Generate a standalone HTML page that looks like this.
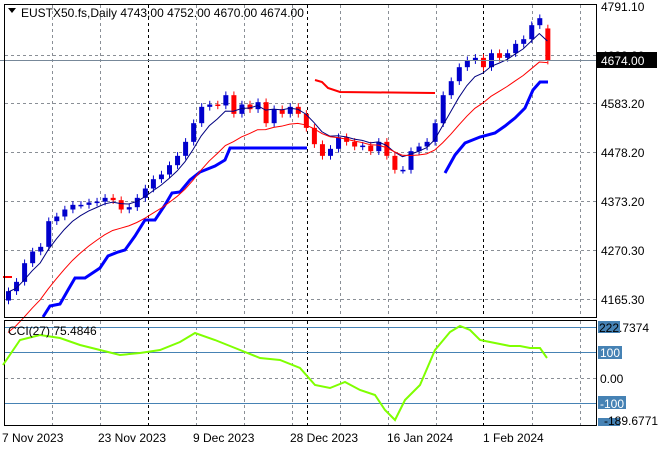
<!DOCTYPE html><html><head><style>
body{margin:0;width:660px;height:450px;background:#fff;overflow:hidden;font-family:"Liberation Sans",sans-serif;}
svg{position:absolute;left:0;top:0}
text{font-family:"Liberation Sans",sans-serif;font-size:12px;fill:#000}
</style></head><body>
<svg id="s" width="660" height="450" xmlns="http://www.w3.org/2000/svg">
<g id="grid" stroke="#8a8f96" stroke-dasharray="3,3" stroke-width="1"></g>
<g id="cand"></g>
<polyline fill="none" stroke="#0000ff" stroke-width="3" points="43,317 50,306 60,304 68,290 75,278 85,278 100,268 108,256 118,252 125,250 135,236 145,220 155,220 165,205 172,193 180,192 190,180 200,172 215,166 225,160 230,148 307,148"/>
<polyline fill="none" stroke="#0000ff" stroke-width="3" points="445,173 455,155 465,143 480,137 495,133 505,126 515,118 525,108 533,90 540,82 548,82"/>
<polyline fill="none" stroke="#ff0000" stroke-width="2" points="315,80 322,82 328,88 340,92 435,93"/>
<line x1="3" y1="277" x2="12" y2="277" stroke="#ff0000" stroke-width="2"/>
<g id="ma"></g>
<line x1="0" y1="60.5" x2="597" y2="60.5" stroke="#778899"/>
<rect x="4.5" y="4.5" width="592" height="313" fill="none" stroke="#000"/>
<rect x="4.5" y="320.5" width="592" height="105" fill="none" stroke="#000"/>
<g stroke="#4682b4"><line x1="5" y1="327.5" x2="596" y2="327.5"/><line x1="5" y1="352.5" x2="596" y2="352.5"/><line x1="5" y1="403.5" x2="596" y2="403.5"/></g>
<polyline fill="none" stroke="#7fff00" stroke-width="2" points="3,365 20,340 40,335 60,338 80,345 100,350 120,355 140,353 160,350 180,342 195,333 215,340 240,350 260,358 280,360 300,368 315,385 330,388 345,382 360,390 375,395 385,410 395,420 405,400 420,385 435,350 450,332 460,326 470,330 480,340 490,342 500,344 510,346 520,346 530,348 540,348 547,358"/>
<path d="M8,8 h8 l-4,5z" fill="#000"/>
<text x="21" y="17">EUSTX50.fs,Daily  4743.00 4752.00 4670.00 4674.00</text>
<text x="8" y="335">CCI(27) 75.4846</text>
<g id="pl"></g>
<rect x="597" y="52" width="60" height="16" fill="#000"/>
<text x="601" y="65" style="fill:#fff">4674.00</text>
<rect x="598" y="321" width="22" height="12" fill="#4682b4"/>
<text x="599" y="332">222.7374</text>
<rect x="598" y="346" width="24" height="13" fill="#4682b4"/>
<text x="600" y="357" style="fill:#fff">100</text>
<text x="600" y="383">0.00</text>
<rect x="598" y="396" width="28" height="13" fill="#4682b4"/>
<text x="600" y="408" style="fill:#fff">-100</text>
<rect x="598" y="418" width="22" height="8" fill="#4682b4"/>
<text x="604" y="425">-189.6771</text>
<text x="2" y="442">7 Nov 2023</text><text x="98" y="442">23 Nov 2023</text><text x="193" y="442">9 Dec 2023</text><text x="290" y="442">28 Dec 2023</text><text x="387" y="442">16 Jan 2024</text><text x="483" y="442">1 Feb 2024</text>
</svg>
<script>
var N="http://www.w3.org/2000/svg";
function el(p,t,a){var e=document.createElementNS(N,t);for(var k in a)e.setAttribute(k,a[k]);document.getElementById(p).appendChild(e);return e;}
function Y(p){return 6+(4791.1-p)*49/105;}
[52,100,196,244,292,340,388,436,532,580].forEach(function(x){el('grid','line',{x1:x+.5,y1:5,x2:x+.5,y2:318});el('grid','line',{x1:x+.5,y1:321,x2:x+.5,y2:425});});
[148,307,483].forEach(function(x){el('grid','line',{x1:x+.5,y1:5,x2:x+.5,y2:318,stroke:'#000'});el('grid','line',{x1:x+.5,y1:321,x2:x+.5,y2:425,stroke:'#000'});});
[55,103,152,201,250,299].forEach(function(y){el('grid','line',{x1:5,y1:y+.5,x2:596,y2:y+.5});});
el('grid','line',{x1:5,y1:378.5,x2:596,y2:378.5});
var pr=[["4791.10",6],["4688.20",55],["4583.20",103],["4478.20",152],["4373.20",201],["4270.30",250],["4165.30",299]];
pr.forEach(function(a){var t=el('pl','text',{x:601,y:a[1]+5});t.textContent=a[0];});
var c=[4180,4200,4240,4265,4275,4330,4340,4355,4365,4365,4370,4372,4380,4375,4355,4360,4380,4400,4420,4430,4450,4470,4500,4540,4575,4580,4578,4600,4560,4580,4570,4585,4540,4570,4560,4575,4560,4530,4495,4470,4485,4510,4500,4490,4492,4480,4500,4470,4440,4440,4480,4490,4500,4540,4600,4630,4660,4675,4680,4660,4690,4680,4690,4710,4720,4750,4765,4674];
var o=4160,e5=4170,e10=4090,b=[],r=[];
c.forEach(function(cl,i){var x=8+i*8.05;var op=(i==c.length-1)?4743:o;var up=cl>=op;var col=up?'#0000cc':'#ff0000';
var hi=Math.max(cl,op)+8,lo=Math.min(cl,op)-8;
el('cand','line',{x1:x+.5,y1:Y(hi),x2:x+.5,y2:Y(lo),stroke:col});
var h=Math.max(1.5,Math.abs(Y(cl)-Y(op)));el('cand','rect',{x:x-2,y:Math.min(Y(cl),Y(op)),width:5,height:h,fill:col});
e5+=(cl-e5)*0.3;e10+=(cl-e10)*0.15;b.push(x+','+Y(e5+5));r.push(x+','+Y(e10-12));o=cl;});
el('ma','polyline',{points:b.join(' '),fill:'none',stroke:'#000080'});
el('ma','polyline',{points:r.join(' '),fill:'none',stroke:'#ff0000'});
</script>
</body></html>
